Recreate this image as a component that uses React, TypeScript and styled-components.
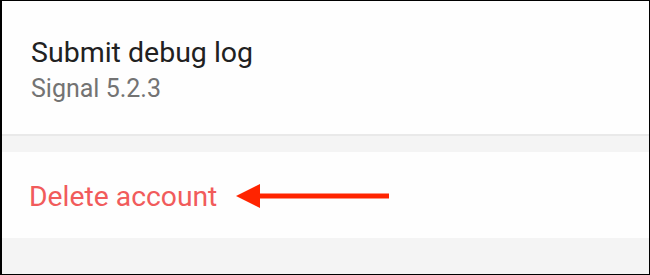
import React from "react";
import styled, { createGlobalStyle } from "styled-components";

const Global = createGlobalStyle`
  html, body { margin: 0; padding: 0; background: #ffffff; }
  * { box-sizing: border-box; }
`;

const Frame = styled.div`
  width: 650px;
  height: 275px;
  border: 1px solid #000;
  border-left-width: 2px;
  background: #f4f4f4;
  display: flex;
  flex-direction: column;
  font-family: Roboto, "Noto Sans", sans-serif;
  overflow: hidden;
`;

const Section = styled.div<{ $h: number; $pt: number; $pl: number }>`
  background: #fefefe;
  height: ${(p) => p.$h}px;
  display: flex;
  flex-direction: column;
  justify-content: flex-start;
  padding-left: ${(p) => p.$pl}px;
  padding-top: ${(p) => p.$pt}px;
`;

const Divider = styled.div`
  height: 2px;
  background: #e9e9e9;
`;

const Spacer = styled.div`
  height: 16px;
  background: #f4f4f4;
`;

const Title = styled.div`
  font-size: 28.5px;
  line-height: 34px;
  color: #212121;
`;

const Subtitle = styled.div`
  font-size: 25px;
  line-height: 30px;
  color: #737373;
  margin-top: 4px;
`;

const Row = styled.div`
  display: flex;
  align-items: center;
  gap: 19px;
`;

const Danger = styled.div`
  font-size: 28.3px;
  line-height: 34px;
  color: #f15b5b;
`;

const ArrowIcon = styled.svg`
  margin-bottom: 2px;
`;

const Arrow = () => (
  <ArrowIcon width="154" height="26" viewBox="0 0 154 26">
    <polygon points="0,13 24,1 24,25" fill="#ff2400" />
    <rect x="22" y="10.5" width="131" height="5" fill="#ff2400" />
  </ArrowIcon>
);

export default function App() {
  return (
    <>
      <Global />
      <Frame>
        <Section $h={133} $pt={35} $pl={29}>
          <Title>Submit debug log</Title>
          <Subtitle>Signal 5.2.3</Subtitle>
        </Section>
        <Divider />
        <Spacer />
        <Section $h={86} $pt={28} $pl={27}>
          <Row>
            <Danger>Delete account</Danger>
            <Arrow />
          </Row>
        </Section>
      </Frame>
    </>
  );
}
